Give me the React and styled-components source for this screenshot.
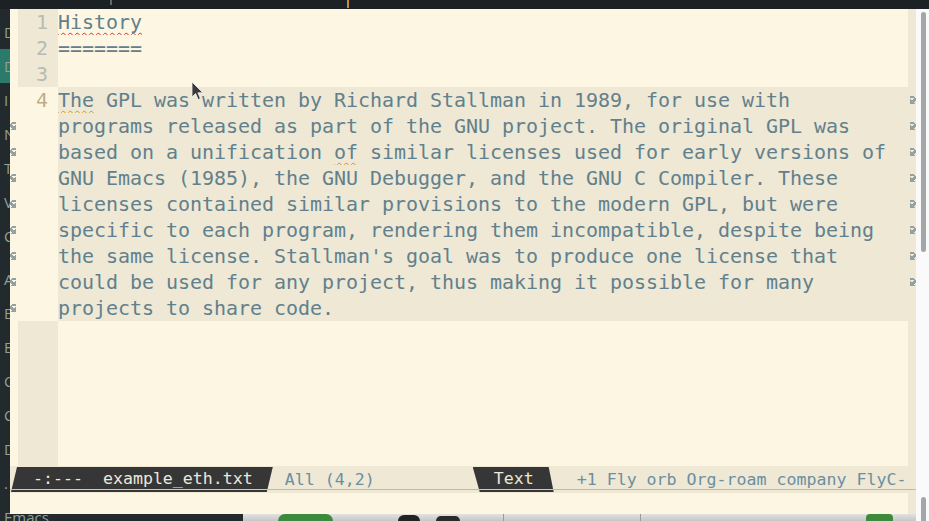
import React from "react";
import styled, { createGlobalStyle } from "styled-components";

const MONO = `"DejaVu Sans Mono", "Liberation Mono", monospace`;

const GlobalStyle = createGlobalStyle`
  html, body { margin: 0; padding: 0; background: #1c2226; overflow: hidden; }
  #root { width: 929px; height: 521px; }
`;

const Desktop = styled.div`
  position: relative;
  width: 929px;
  height: 521px;
  overflow: hidden;
  background: #1c2226;
  display: grid;
  grid-template-rows: 9px 1fr;
`;

const TopBar = styled.div`
  background: #1b2124;
  display: flex;
  align-items: flex-start;
`;

const TopMark = styled.div`
  width: ${(p) => p.$w}px;
  height: ${(p) => p.$h}px;
  margin-left: ${(p) => p.$gap}px;
  background: ${(p) => p.$color};
`;

const BackApp = styled.div`
  display: flex;
  min-height: 0;
`;

const Sidebar = styled.div`
  width: 243px;
  background: #232a2d;
  display: flex;
  flex-direction: column;
  padding-top: 6px;
  box-sizing: border-box;
  overflow: hidden;
`;

const SideItem = styled.div`
  height: 34px;
  flex: none;
  display: flex;
  align-items: center;
  padding-left: 4px;
  font-family: "Open Sans", "Noto Sans", sans-serif;
  font-size: 15px;
  color: #8fa198;
  background: ${(p) => (p.$active ? "#2a7b6c" : "transparent")};
  margin-top: ${(p) => p.$gap || 0}px;
`;

const Workspace = styled.div`
  flex: 1;
  display: flex;
  min-width: 0;
`;

const MainCol = styled.div`
  flex: 1;
  display: flex;
  flex-direction: column;
`;

const Content = styled.div`
  flex: 1;
  background: #f6f6f6;
`;

const Toolbar = styled.div`
  height: 7px;
  background: linear-gradient(#e2e2e2, #c6c6c6);
  display: flex;
  align-items: flex-end;
`;

const ToolPiece = styled.div`
  flex: none;
  width: ${(p) => p.$w}px;
  height: ${(p) => p.$h || 7}px;
  margin-left: ${(p) => p.$gap}px;
  background: ${(p) => p.$color};
  border-radius: ${(p) => p.$r || "0"};
`;

const ScrollCol = styled.div`
  width: 13px;
  background: #fafafa;
  display: flex;
  flex-direction: column;
  justify-content: space-between;
`;

const Thumb = styled.div`
  width: 5px;
  margin-left: 5px;
  margin-top: ${(p) => p.$top || 0}px;
  height: ${(p) => p.$h}px;
  background: #a4a7a7;
  border-radius: 3px 3px ${(p) => (p.$open ? "0 0" : "3px 3px")};
`;

/* Emacs window (a window on the desktop) */
const EmacsFrame = styled.div`
  position: absolute;
  left: 10px;
  top: 9px;
  width: 906px;
  height: 505px;
  background: #fdf6e3;
  display: flex;
  flex-direction: column;
  font-family: ${MONO};
`;

const Body = styled.div`
  height: 457px;
  display: flex;
  flex-direction: column;
`;

const Row = styled.div`
  display: grid;
  grid-template-columns: 8px 40px 1fr 8px;
  height: 26px;
  flex: none;
`;

const Filler = styled(Row)`
  flex: 1;
  height: auto;
`;

const LFringe = styled.div`
  background: #fdf6e3;
  display: flex;
  align-items: center;
`;

const RFringe = styled.div`
  background: #eee8d5;
  display: flex;
  align-items: center;
`;

const Num = styled.div`
  background: ${(p) => (p.$current ? "#fdf6e3" : "#eee8d5")};
  color: ${(p) => (p.$current ? "#bcae86" : "#b7bbb3")};
  text-align: right;
  padding-right: 10px;
  font-size: 20px;
  line-height: 26px;
`;

const TextCell = styled.div`
  background: ${(p) => (p.$current ? "#eee8d5" : "#fdf6e3")};
  color: #62808c;
  font-size: 20px;
  line-height: 26px;
  letter-spacing: -0.04px;
  white-space: pre;
  overflow: hidden;
`;

const Squiggle = styled.span`
  text-decoration-line: underline;
  text-decoration-style: wavy;
  text-decoration-color: ${(p) => p.$color};
  text-decoration-thickness: 1.4px;
  text-decoration-skip-ink: none;
  text-underline-offset: 3px;
`;

const LINE = "#bdbab0";

const Modeline = styled.div`
  height: 27px;
  background: linear-gradient(
    to bottom,
    #eee8d5 23px,
    ${LINE} 23px,
    ${LINE} 24px,
    #eee8d5 24px
  );
  display: flex;
  align-items: center;
  font-size: 16.6px;
  white-space: pre;
`;

const Pill = styled.div`
  height: 25px;
  line-height: 24px;
  background: linear-gradient(
    to bottom,
    #363636 22px,
    #c9c7c0 22px,
    #c9c7c0 23px,
    #363636 23px
  );
  color: #ece7da;
  padding: 0 ${(p) => p.$pr}px 0 ${(p) => p.$pl}px;
  margin-left: ${(p) => p.$gap}px;
  clip-path: ${(p) =>
    p.$lean === "right"
      ? "polygon(6px 0, 100% 0, calc(100% - 6px) 100%, 0 100%)"
      : "polygon(0 0, calc(100% - 5px) 0, 100% 100%, 7px 100%)"};
`;

const ModeText = styled.span`
  color: #6b8fa2;
  margin-left: ${(p) => p.$gap}px;
`;

const Echo = styled.div`
  flex: 1;
  display: grid;
  grid-template-columns: 1fr 8px;
`;

const EchoArea = styled.div`
  background: #fdf6e3;
`;

const Pointer = styled.svg`
  position: absolute;
  left: 191px;
  top: 81px;
`;

const RIGHT_ARROW = [0x3c, 0x3e, 0x03, 0x27, 0x3f, 0x3e, 0x3c, 0x3e];
const LEFT_ARROW = [0x3c, 0x7c, 0xc0, 0xe4, 0xfc, 0x7c, 0x3c, 0x7c];

function FringeBitmap({ bits }) {
  const rects = [];
  bits.forEach((b, y) => {
    for (let x = 0; x < 8; x++) {
      if (b & (0x80 >> x)) rects.push(<rect key={`${x}-${y}`} x={x} y={y} width="1" height="1" />);
    }
  });
  return (
    <svg width="8" height="8" viewBox="0 0 8 8" fill="#93a1a1" shapeRendering="crispEdges">
      {rects}
    </svg>
  );
}

const lines = [
  { num: "1", segs: [{ t: "History", c: "#e0312a" }] },
  { num: "2", segs: ["======="] },
  { num: "3", segs: [""] },
];

const para = [
  [{ t: "The", c: "#d29a1a" }, " GPL was written by Richard Stallman in 1989, for use with"],
  ["programs released as part of the GNU project. The original GPL was"],
  ["based on a unification ", { t: "of", c: "#d29a1a" }, " similar licenses used for early versions of"],
  ["GNU Emacs (1985), the GNU Debugger, and the GNU C Compiler. These"],
  ["licenses contained similar provisions to the modern GPL, but were"],
  ["specific to each program, rendering them incompatible, despite being"],
  ["the same license. Stallman's goal was to produce one license that"],
  ["could be used for any project, thus making it possible for many"],
  ["projects to share code."],
];

function Segs({ segs }) {
  return segs.map((s, i) =>
    typeof s === "string" ? (
      <React.Fragment key={i}>{s}</React.Fragment>
    ) : (
      <Squiggle key={i} $color={s.c}>
        {s.t}
      </Squiggle>
    )
  );
}

const sideItems = ["D", "D", "I", "N", "T", "V", "C", "A", "B", "E", "C", "C", "D", ".", "Emacs"];

export default function App() {
  return (
    <>
      <GlobalStyle />
      <Desktop>
        <TopBar>
          <TopMark $gap={110} $w={2} $h={5} $color="#5d6a6e" />
          <TopMark $gap={235} $w={2} $h={8} $color="#c98a3a" />
        </TopBar>
        <BackApp>
          <Sidebar>
            {sideItems.map((s, i) => (
              <SideItem key={i} $active={i === 1} $gap={i === 7 ? 9 : 0}>
                {s}
              </SideItem>
            ))}
          </Sidebar>
          <Workspace>
            <MainCol>
              <Content />
              <Toolbar>
                <ToolPiece $gap={35} $w={55} $color="#3b8a3e" $r="7px 7px 0 0" />
                <ToolPiece $gap={65} $w={22} $h={6} $color="#222" $r="10px 10px 0 0" />
                <ToolPiece $gap={16} $w={24} $h={5} $color="#2a2a2a" $r="12px 12px 0 0" />
                <ToolPiece $gap={43} $w={1} $color="#9a9a9a" />
                <ToolPiece $gap={136} $w={1} $color="#9a9a9a" />
                <ToolPiece $gap={225} $w={27} $color="#3b8a3e" $r="4px 4px 0 0" />
              </Toolbar>
            </MainCol>
            <ScrollCol>
              <Thumb $top={3} $h={240} />
              <Thumb $h={24} $open />
            </ScrollCol>
          </Workspace>
        </BackApp>

        <EmacsFrame>
          <Body>
            {lines.map((l) => (
              <Row key={l.num}>
                <LFringe />
                <Num>{l.num}</Num>
                <TextCell>
                  <Segs segs={l.segs} />
                </TextCell>
                <RFringe />
              </Row>
            ))}
            {para.map((segs, i) => (
              <Row key={`p${i}`}>
                <LFringe>{i > 0 && <FringeBitmap bits={LEFT_ARROW} />}</LFringe>
                <Num $current>{i === 0 ? "4" : ""}</Num>
                <TextCell $current>
                  <Segs segs={segs} />
                </TextCell>
                <RFringe>{i < para.length - 1 && <FringeBitmap bits={RIGHT_ARROW} />}</RFringe>
              </Row>
            ))}
            <Filler>
              <LFringe />
              <Num />
              <TextCell />
              <RFringe />
            </Filler>
          </Body>
          <Modeline>
            <Pill $lean="right" $gap={1} $pl={22} $pr={20}>
              {"-:---  example_eth.txt"}
            </Pill>
            <ModeText $gap={12}>All (4,2)</ModeText>
            <Pill $lean="left" $gap={98} $pl={21} $pr={20}>
              Text
            </Pill>
            <ModeText $gap={23}>+1 Fly orb Org-roam company FlyC-</ModeText>
          </Modeline>
          <Echo>
            <EchoArea />
            <RFringe />
          </Echo>
        </EmacsFrame>

        <Pointer width="14" height="21" viewBox="0 0 14 21">
          <path
            d="M1 1 L1 16 L4.6 12.6 L7.2 18.6 L9.4 17.6 L6.9 11.8 L11.8 11.8 Z"
            fill="#3a3a3a"
            stroke="#f2f2f2"
            strokeWidth="0.8"
            strokeLinejoin="round"
          />
        </Pointer>
      </Desktop>
    </>
  );
}
